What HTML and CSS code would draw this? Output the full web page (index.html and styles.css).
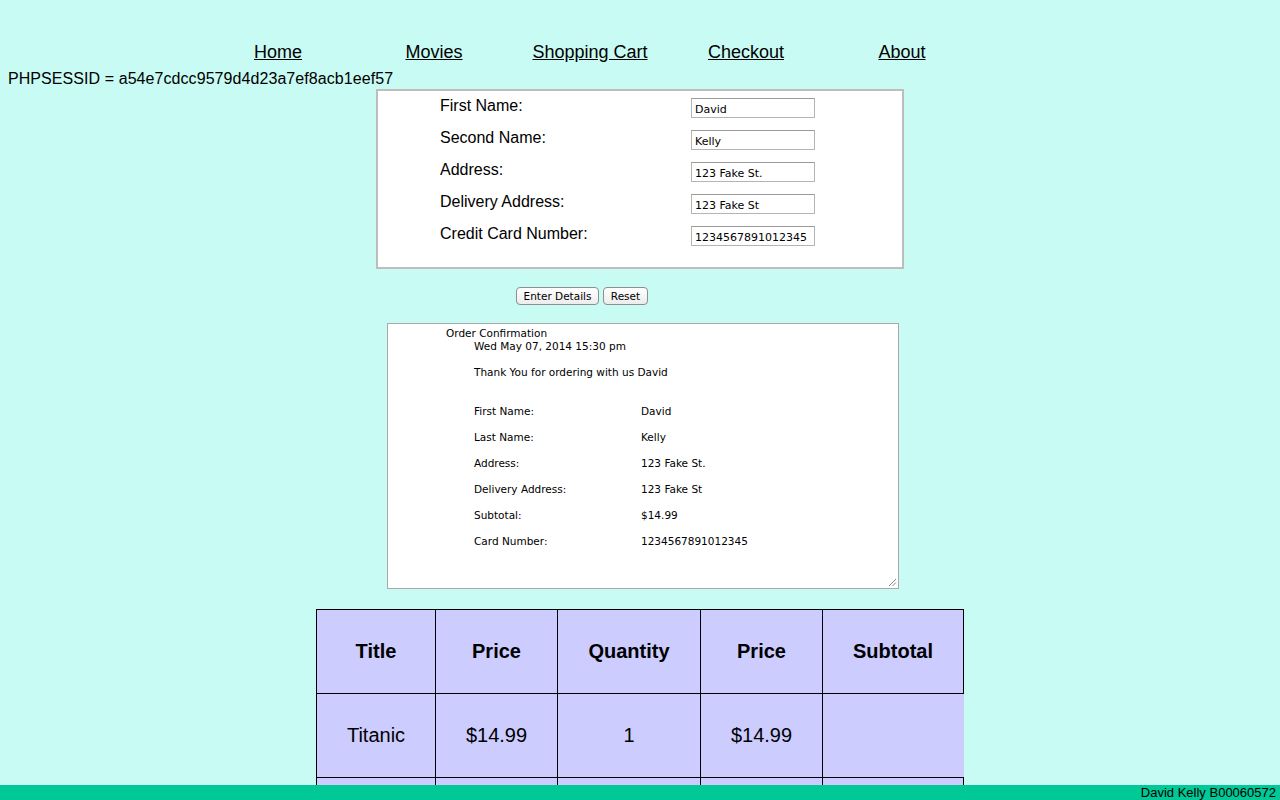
FILE: index.html
```html
<!DOCTYPE html>
<html>
<head>
<meta charset="utf-8">
<title>Checkout</title>
<link rel="stylesheet" href="styles.css">
</head>
<body>
<nav class="nav">
  <a class="nav-link" href="#">Home</a>
  <a class="nav-link" href="#">Movies</a>
  <a class="nav-link" href="#">Shopping Cart</a>
  <a class="nav-link" href="#">Checkout</a>
  <a class="nav-link" href="#">About</a>
</nav>
<div class="session">PHPSESSID = a54e7cdcc9579d4d23a7ef8acb1eef57</div>

<form class="details">
  <div class="field"><label class="field-label">First Name:</label><input class="field-input" type="text" value="David"></div>
  <div class="field"><label class="field-label">Second Name:</label><input class="field-input" type="text" value="Kelly"></div>
  <div class="field"><label class="field-label">Address:</label><input class="field-input" type="text" value="123 Fake St."></div>
  <div class="field"><label class="field-label">Delivery Address:</label><input class="field-input" type="text" value="123 Fake St"></div>
  <div class="field"><label class="field-label">Credit Card Number:</label><input class="field-input" type="text" value="1234567891012345"></div>
</form>

<div class="buttons">
  <button class="btn" type="button">Enter Details</button>
  <button class="btn" type="button">Reset</button>
</div>

<div class="confirm">
  <div class="confirm-title">Order Confirmation</div>
  <div class="confirm-body">
    <div class="confirm-date">Wed May 07, 2014 15:30 pm</div>
    <div class="confirm-thanks">Thank You for ordering with us David</div>
    <div class="confirm-grid">
      <span>First Name:</span><span>David</span>
      <span>Last Name:</span><span>Kelly</span>
      <span>Address:</span><span>123 Fake St.</span>
      <span>Delivery Address:</span><span>123 Fake St</span>
      <span>Subtotal:</span><span>$14.99</span>
      <span>Card Number:</span><span>1234567891012345</span>
    </div>
  </div>
  <svg class="grip" width="9" height="9" viewBox="0 0 9 9"><path d="M8 1 L1 8 M8 4.5 L4.5 8" stroke="#888" stroke-width="1" fill="none"/></svg>
</div>

<table class="cart">
  <colgroup>
    <col class="c1"><col class="c2"><col class="c3"><col class="c4"><col class="c5">
  </colgroup>
  <tr class="head">
    <th>Title</th><th>Price</th><th>Quantity</th><th>Price</th><th>Subtotal</th>
  </tr>
  <tr>
    <td>Titanic</td><td>$14.99</td><td>1</td><td>$14.99</td><td class="open"></td>
  </tr>
  <tr>
    <td></td><td></td><td></td><td></td><td></td>
  </tr>
</table>

<footer class="footer">David Kelly B00060572</footer>
</body>
</html>
```

FILE: styles.css
```css
html, body {
  background: #c8fbf4;
}
body {
  margin: 8px;
  font-family: "Liberation Sans", Arial, sans-serif;
  color: #000;
  padding-bottom: 40px;
}
.nav {
  display: flex;
  margin: 34px 0 0 192px;
  height: 21px;
}
.nav-link {
  width: 156px;
  text-align: center;
  font-size: 18px;
  line-height: 21px;
  color: #000;
  text-decoration: underline;
}
.session {
  margin-top: 7px;
  font-size: 16px;
  line-height: 18px;
  letter-spacing: 0.07px;
}
.details {
  box-sizing: border-box;
  width: 528px;
  height: 180px;
  margin: 1px 0 0 368px;
  border: 2px solid #bdbdbd;
  background: #fff;
  padding: 5px 0 0 62px;
  display: flex;
  flex-direction: column;
  gap: 10px;
}
.field {
  display: flex;
  align-items: flex-start;
  height: 22px;
}
.field-label {
  width: 251px;
  margin-top: 1px;
  font-size: 16px;
  line-height: 18px;
}
.field-input {
  box-sizing: border-box;
  margin: 2px 0 0;
  width: 124px;
  height: 20px;
  border: 1px solid #b4b4b4;
  border-top-color: #9a9a9a;
  padding: 2px 3px 0;
  font-family: "DejaVu Sans", sans-serif;
  font-size: 11px;
  color: #000;
  background: #fff;
}
.buttons {
  display: flex;
  gap: 4px;
  margin: 18px 0 0 508px;
  height: 18px;
}
.btn {
  box-sizing: border-box;
  height: 18px;
  padding: 0 6px;
  border: 1px solid #8e8e8e;
  border-radius: 4px;
  background: linear-gradient(#ffffff, #ececec);
  font-family: "DejaVu Sans", sans-serif;
  font-size: 10.5px;
  line-height: 15px;
  color: #000;
}
.btn:first-child { width: 83px; }
.btn:last-child { width: 45px; }
.confirm {
  position: relative;
  box-sizing: border-box;
  width: 512px;
  height: 266px;
  margin: 18px 0 0 379px;
  border: 1px solid #a9a9a9;
  background: #fff;
  padding: 3px 0 0 58px;
  font-family: "DejaVu Sans", sans-serif;
  font-size: 10.5px;
  line-height: 13px;
}
.confirm-body {
  padding-left: 28px;
}
.confirm-thanks {
  margin-top: 13px;
}
.confirm-grid {
  margin-top: 26px;
  display: grid;
  grid-template-columns: 167px auto;
  row-gap: 13px;
}
.grip {
  position: absolute;
  right: 1px;
  bottom: 1px;
}
.cart {
  margin: 20px 0 0 308px;
  border-collapse: collapse;
  width: 647px;
  background: #ccccff;
  table-layout: fixed;
  font-size: 20px;
}
.c1 { width: 119px; }
.c2 { width: 122px; }
.c3 { width: 143px; }
.c4 { width: 122px; }
.c5 { width: 141px; }
.cart th, .cart td {
  border: 1px solid #000;
  height: 83px;
  padding: 0;
  text-align: center;
  vertical-align: middle;
}
.cart th {
  font-weight: bold;
}
.cart td.open {
  border-right-color: #ccccff;
}
.footer {
  position: fixed;
  left: 0;
  right: 0;
  bottom: 0;
  height: 15px;
  background: #00c896;
  text-align: right;
  padding-right: 4px;
  font-size: 13px;
  line-height: 16px;
}
```
